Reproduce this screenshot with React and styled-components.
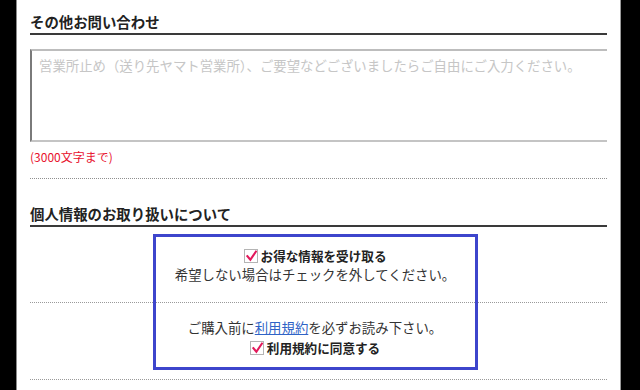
import React from "react";
import styled, { createGlobalStyle } from "styled-components";

const GlobalStyle = createGlobalStyle`
  html, body {
    margin: 0;
    padding: 0;
    background: #000;
  }
  body {
    font-family: "Noto Sans CJK JP", "Noto Sans", sans-serif;
    color: #333;
  }
`;

const CheckMark = () => (
  <svg width="13" height="13" viewBox="0 0 13 13">
    <polyline
      points="2.6,6.2 5.8,10 11.8,1.2"
      fill="none"
      stroke="#e2195b"
      strokeWidth="2.3"
      strokeLinecap="square"
    />
  </svg>
);

const App = () => {
  return (
    <>
      <GlobalStyle />
      <Page>
        <Main>
          <SectionTitle>その他お問い合わせ</SectionTitle>
          <Block>
            <TextWrap>
              <TextArea placeholder="営業所止め（送り先ヤマト営業所）、ご要望などございましたらご自由にご入力ください。" />
            </TextWrap>
            <Note>(3000文字まで)</Note>
          </Block>

          <SectionTitle $gap>個人情報のお取り扱いについて</SectionTitle>
          <Consent>
            <ConsentRow $top={20} $bottom={19}>
              <CheckLine>
                <Box>
                  <CheckMark />
                </Box>
                <Label>お得な情報を受け取る</Label>
              </CheckLine>
              <Line>希望しない場合はチェックを外してください。</Line>
            </ConsentRow>
            <ConsentRow $top={15} $bottom={22}>
              <Line>
                ご購入前に<TermsLink href="#">利用規約</TermsLink>を必ずお読み下さい。
              </Line>
              <CheckLine $space={3}>
                <Box>
                  <CheckMark />
                </Box>
                <Label>利用規約に同意する</Label>
              </CheckLine>
            </ConsentRow>
            <Highlight />
          </Consent>
        </Main>
      </Page>
    </>
  );
};

const Page = styled.div`
  display: flex;
  height: 390px;
  overflow: hidden;
`;

const Main = styled.div`
  flex: none;
  margin-left: 16px;
  width: 577px;
  background: #fff;
  border-left: 1px solid #8a8a8a;
  border-right: 1px solid #9a9a9a;
  padding: 12px 13px 0 13px;
`;

const SectionTitle = styled.h2`
  margin: ${(p) => (p.$gap ? "25px" : "0")} 0 0 0;
  font-size: 14.4px;
  line-height: 20px;
  font-weight: bold;
  color: #222;
  padding-bottom: 1px;
  border-bottom: 2px solid #3a3a3a;
`;

const Block = styled.div`
  padding: 14px 0 12px;
  border-bottom: 1px dotted #8f8f8f;
`;

const TextWrap = styled.div`
  overflow: hidden;
`;

const TextArea = styled.textarea`
  display: block;
  box-sizing: border-box;
  width: 640px;
  height: 93px;
  margin: 0;
  padding: 5px 7px;
  resize: none;
  font-family: "Noto Sans CJK JP", sans-serif;
  font-size: 13.4px;
  line-height: 18px;
  border-top: 2px solid #bdbdbd;
  border-left: 2px solid #7a7a7a;
  border-bottom: 2px solid #c4c4c4;
  border-right: 2px solid #c4c4c4;
  outline: none;
  &::placeholder {
    color: #c6c6c6;
  }
`;

const Note = styled.div`
  margin-top: 6px;
  font-size: 12px;
  line-height: 18px;
  color: #e8112d;
`;

const Consent = styled.div`
  position: relative;
`;

const ConsentRow = styled.div`
  padding: ${(p) => p.$top}px 7px ${(p) => p.$bottom}px 0;
  border-bottom: 1px dotted #9a9a9a;
  text-align: center;
`;

const CheckLine = styled.div`
  display: flex;
  justify-content: center;
  align-items: center;
  gap: 3px;
  height: 18px;
  margin-top: ${(p) => p.$space || 0}px;
`;

const Box = styled.span`
  display: inline-flex;
  box-sizing: border-box;
  width: 14px;
  height: 14px;
  border: 1px solid #b4b4b4;
  background: #fff;
  align-items: center;
  justify-content: center;
`;

const Label = styled.span`
  font-size: 12.6px;
  font-weight: bold;
  color: #222;
  line-height: 18px;
`;

const Line = styled.div`
  font-size: 13.4px;
  line-height: 18px;
  color: #333;
`;

const TermsLink = styled.a`
  color: #2f63c6;
  text-decoration: underline;
`;

const Highlight = styled.div`
  position: absolute;
  left: 123px;
  top: 7px;
  width: 325px;
  height: 136px;
  box-sizing: border-box;
  border: 3px solid #3d45cc;
  pointer-events: none;
`;

export default App;
